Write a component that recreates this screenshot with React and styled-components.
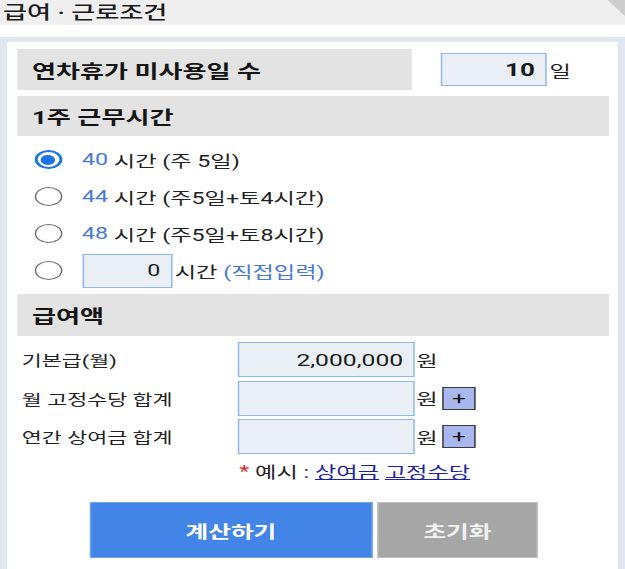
import React from "react";
import styled, { createGlobalStyle } from "styled-components";

// the reference is a phone capture squeezed into a wide frame: we lay out
// at 431px and stretch horizontally to 625px
const STRETCH = 1.45;

const GlobalStyle = createGlobalStyle`
  html, body {
    margin: 0;
    padding: 0;
    background: #ffffff;
    overflow: hidden;
  }
  body {
    font-family: Roboto, "Noto Sans CJK KR", "Noto Sans", sans-serif;
    color: #1c1c1c;
  }
`;

const Page = styled.div`
  width: 431px;
  transform: scaleX(${STRETCH});
  transform-origin: 0 0;
`;

const TopBar = styled.div`
  height: 25px;
  background: #efefef;
  display: flex;
  align-items: center;
  justify-content: space-between;
`;

const TopTitle = styled.div`
  padding-left: 2px;
  font-size: 18px;
  font-weight: 500;
  color: #1a1a1a;
  line-height: 25px;
`;

const Corner = styled.svg`
  width: 12.5px;
  height: 25px;
  display: block;
  align-self: flex-start;
`;

const Panel = styled.div`
  margin-top: 12px;
  border: 5px solid #e2e6f1;
  border-bottom: none;
  background: #ffffff;
  padding: 7px 6px 12px 7px;
`;

const LeaveRow = styled.div`
  display: flex;
  align-items: center;
  height: 41px;
`;

const LabelBox = styled.div`
  width: 272px;
  height: 41px;
  box-sizing: border-box;
  background: #e3e3e3;
  padding-left: 10px;
  display: flex;
  align-items: center;
  font-size: 18px;
  font-weight: 700;
  color: #141414;
`;

const SectionHead = styled.div`
  margin-top: ${p => p.$top || 0}px;
  height: ${p => p.$h || 40}px;
  background: #e3e3e3;
  padding-left: 10px;
  display: flex;
  align-items: center;
  font-size: 18px;
  font-weight: 700;
  color: #141414;
`;

const Field = styled.div`
  width: ${p => p.$w}px;
  height: ${p => p.$h}px;
  margin-left: ${p => p.$ml || 0}px;
  box-sizing: border-box;
  background: #eaeef5;
  border: 1px solid #8fb8e9;
  display: flex;
  align-items: center;
  justify-content: flex-end;
  padding-right: 7px;
  font-size: ${p => p.$fs || 16}px;
  font-weight: ${p => (p.$bold ? 700 : 400)};
  color: #1a1a1a;
`;

const Unit = styled.span`
  margin-left: ${p => p.$ml || 2}px;
  font-size: 16px;
  color: #222;
`;

const RadioList = styled.div`
  padding-top: 5px;
  display: flex;
  flex-direction: column;
`;

const RadioRow = styled.div`
  height: 37px;
  display: flex;
  align-items: center;
  font-size: 16px;
  color: #222;
`;

const Radio = styled.span`
  width: 19px;
  height: 19px;
  margin-left: 11.5px;
  margin-right: 14px;
  box-sizing: border-box;
  border-radius: 50%;
  border: ${p => (p.$checked ? "2px solid #1a73e8" : "1.5px solid #6e6e6e")};
  display: flex;
  align-items: center;
  justify-content: center;
  flex-shrink: 0;
  &::after {
    content: "";
    width: 10px;
    height: 10px;
    border-radius: 50%;
    background: #1a73e8;
    display: ${p => (p.$checked ? "block" : "none")};
  }
`;

const Blue = styled.span`
  color: #4579d6;
  margin-right: ${p => p.$mr || 0}px;
`;

const PayList = styled.div`
  padding-top: 6px;
  display: flex;
  flex-direction: column;
  gap: 3.5px;
`;

const PayRow = styled.div`
  height: 35px;
  display: flex;
  align-items: center;
`;

const PayLabel = styled.div`
  width: 149px;
  padding-left: 3px;
  font-size: 15px;
  color: #222;
`;

const PlusButton = styled.span`
  width: 23.5px;
  height: 23px;
  margin-left: 3px;
  box-sizing: border-box;
  background: #a9b7ef;
  border: 1.5px solid #3a3a3a;
  display: flex;
  align-items: center;
  justify-content: center;
  font-size: 17px;
  line-height: 1;
  color: #111;
`;

const Example = styled.div`
  margin-top: 2px;
  height: 30px;
  padding-left: 153px;
  display: flex;
  align-items: center;
  font-size: 16px;
  color: #222;
  white-space: nowrap;
`;

const Star = styled.span`
  color: #e02a2a;
  margin-right: 4px;
`;

const TextLink = styled.a`
  color: #1c22a8;
  text-decoration: underline;
  margin-left: ${p => p.$ml || 0}px;
`;

const Buttons = styled.div`
  margin-top: 16px;
  display: flex;
  justify-content: center;
  gap: 3.5px;
  padding-left: 1px;
`;

const ActionButton = styled.button`
  width: ${p => p.$w}px;
  height: 56px;
  border: 1px solid ${p => (p.$primary ? "#6da2ee" : "#c4c4c4")};
  background: ${p => (p.$primary ? "#4285e6" : "#a6a6a6")};
  color: ${p => (p.$primary ? "#ffffff" : "#f2f2f2")};
  font-family: Roboto, "Noto Sans CJK KR", sans-serif;
  font-size: 17px;
  font-weight: 700;
  padding: 0;
`;

const hours = [
  { h: "40", rest: "시간 (주 5일)", checked: true },
  { h: "44", rest: "시간 (주5일+토4시간)" },
  { h: "48", rest: "시간 (주5일+토8시간)" },
];

export default function App() {
  return (
    <Page>
      <GlobalStyle />
      <TopBar>
        <TopTitle>급여 · 근로조건</TopTitle>
        <Corner viewBox="0 0 12.5 25" preserveAspectRatio="none">
          <polygon points="0,0 12.5,0 12.5,17" fill="#cdcdcd" />
        </Corner>
      </TopBar>

      <Panel>
        <LeaveRow>
          <LabelBox>연차휴가 미사용일 수</LabelBox>
          <Field $w={73} $h={33} $ml={20} $fs={18} $bold>10</Field>
          <Unit $ml={2}>일</Unit>
        </LeaveRow>

        <SectionHead $top={6} $h={40}>1주 근무시간</SectionHead>
        <RadioList>
          {hours.map(o => (
            <RadioRow key={o.h}>
              <Radio $checked={o.checked} />
              <Blue $mr={4}>{o.h}</Blue>
              {o.rest}
            </RadioRow>
          ))}
          <RadioRow>
            <Radio />
            <Field $w={62} $h={34} $ml={0}>0</Field>
            <Unit $ml={2}>시간 <Blue>(직접입력)</Blue></Unit>
          </RadioRow>
        </RadioList>

        <SectionHead $top={5} $h={42}>급여액</SectionHead>
        <PayList>
          <PayRow>
            <PayLabel>기본급(월)</PayLabel>
            <Field $w={122} $h={35} $fs={17}>2,000,000</Field>
            <Unit $ml={1}>원</Unit>
          </PayRow>
          <PayRow>
            <PayLabel>월 고정수당 합계</PayLabel>
            <Field $w={122} $h={35} />
            <Unit $ml={1}>원</Unit>
            <PlusButton>+</PlusButton>
          </PayRow>
          <PayRow>
            <PayLabel>연간 상여금 합계</PayLabel>
            <Field $w={122} $h={35} />
            <Unit $ml={1}>원</Unit>
            <PlusButton>+</PlusButton>
          </PayRow>
        </PayList>

        <Example>
          <Star>*</Star>
          예시 :&nbsp;
          <TextLink>상여금</TextLink>
          <TextLink $ml={4}>고정수당</TextLink>
        </Example>

        <Buttons>
          <ActionButton $primary $w={194.5}>계산하기</ActionButton>
          <ActionButton $w={111}>초기화</ActionButton>
        </Buttons>
      </Panel>
    </Page>
  );
}
